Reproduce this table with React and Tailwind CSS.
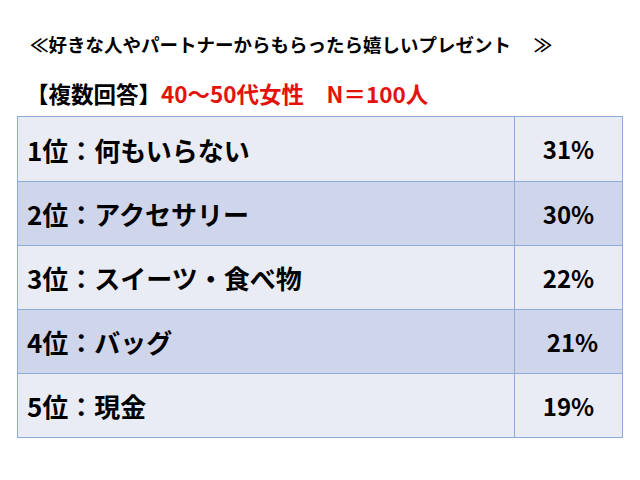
const rows = [
  { label: "1位：何もいらない", pct: "31%" },
  { label: "2位：アクセサリー", pct: "30%" },
  { label: "3位：スイーツ・食べ物", pct: "22%" },
  { label: "4位：バッグ", pct: "21%", nudge: true },
  { label: "5位：現金", pct: "19%" },
];

export default function App() {
  return (
    <div
      className="w-[640px] h-[480px] bg-white text-black flex flex-col"
      style={{ fontFamily: '"Noto Sans CJK JP", "Noto Sans", sans-serif' }}
    >
      <div className="pt-[32px] pl-[30px] text-[18.5px] leading-[24px] font-bold whitespace-pre">
        ≪好きな人やパートナーからもらったら嬉しいプレゼント　 ≫
      </div>
      <div className="mt-[22px] pl-[26px] text-[22.5px] leading-[30px] font-bold whitespace-pre">
        【複数回答】<span className="text-[#e3120b]">40～50代女性　N＝100人</span>
      </div>
      <div className="mt-[8px] ml-[17px] w-[606px] border border-[#8eaad8]">
        {rows.map((r, i) => (
          <div
            key={i}
            className={`flex h-[64px] ${i > 0 ? "border-t border-[#8eaad8]" : ""} ${
              i % 2 === 0 ? "bg-[#e9ebf5]" : "bg-[#cfd5ea]"
            }`}
          >
            <div className="w-[497px] flex items-center pl-[9px] text-[26px] font-bold border-r border-[#8eaad8]">
              {r.label}
            </div>
            <div
              className={`flex-1 flex items-center justify-center text-[24px] font-bold ${
                r.nudge ? "pl-[8px]" : ""
              }`}
            >
              {r.pct}
            </div>
          </div>
        ))}
      </div>
    </div>
  );
}
